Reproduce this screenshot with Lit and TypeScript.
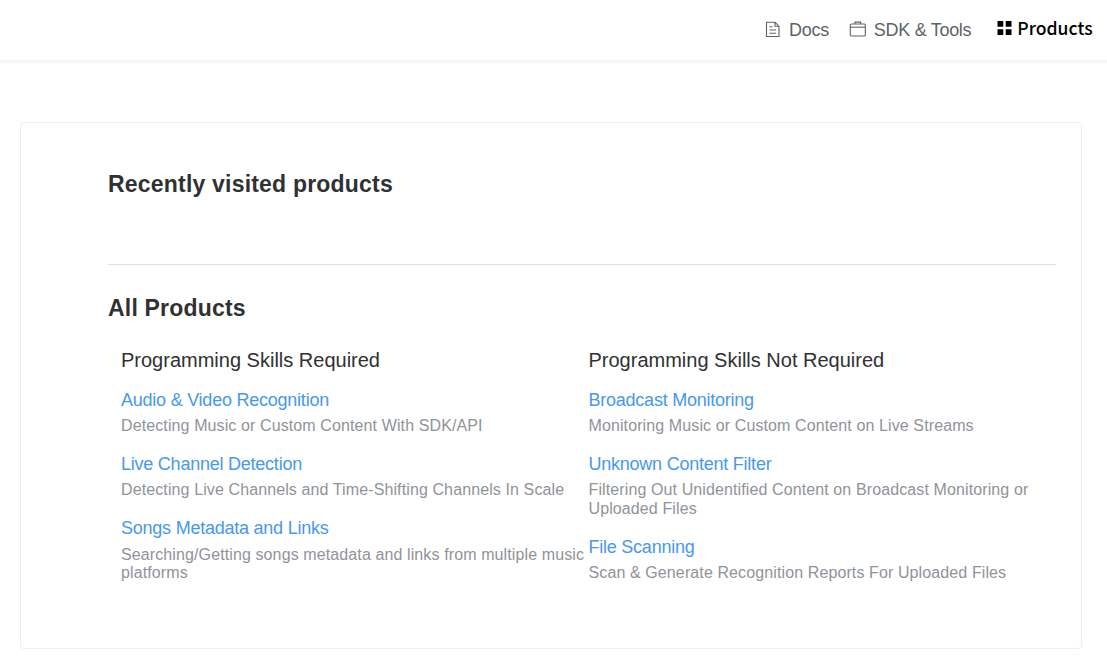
import { LitElement, html, css } from "lit";
import { customElement } from "lit/decorators.js";

type Product = { name: string; text: string };
const coding: Product[] = [
  { name: "Audio & Video Recognition", text: "Detecting Music or Custom Content With SDK/API" },
  { name: "Live Channel Detection", text: "Detecting Live Channels and Time-Shifting Channels In Scale" },
  { name: "Songs Metadata and Links", text: "Searching/Getting songs metadata and links from multiple music platforms" },
];
const noCoding: Product[] = [
  { name: "Broadcast Monitoring", text: "Monitoring Music or Custom Content on Live Streams" },
  { name: "Unknown Content Filter", text: "Filtering Out Unidentified Content on Broadcast Monitoring or Uploaded Files" },
  { name: "File Scanning", text: "Scan & Generate Recognition Reports For Uploaded Files" },
];

@customElement("app-root")
export class AppRoot extends LitElement {
  static styles = css`
    :host { display: block; height: 661px; overflow: hidden; background: #fff; font-family: "Liberation Sans", Arial, sans-serif; color: #303133; }
    * { box-sizing: border-box; }
    header { height: 60px; display: flex; justify-content: flex-end; align-items: center; padding-right: 14.4px; box-shadow: 0 2px 2px 1px #f6f6f6; color: #606266; font-size: 18px; letter-spacing: -0.3px; white-space: nowrap; }
    .item { display: flex; align-items: center; }
    .item svg { display: block; }
    .docs { gap: 7px; margin-right: 20px; }
    .tools { gap: 7px; margin-right: 26px; }
    .products { gap: 5px; color: #000; font: 500 17.6px/26px "Noto Sans CJK SC", "Noto Sans", sans-serif; letter-spacing: 0; padding-bottom: 3px; }
    .products svg { margin-bottom: 1px; }
    .products span { padding-bottom: 1px; }
    .card { margin: 62px 25px 0 20px; height: 527px; border: 1px solid #ebeef5; border-radius: 4px; padding: 47px 25px 0 87px; }
    h2 { margin: 0; font-size: 23px; line-height: 28px; letter-spacing: 0.2px; }
    .recent { height: 95px; border-bottom: 1px solid #dcdfe6; }
    .all { margin-top: 29px; }
    .columns { display: grid; grid-template-columns: 467.5px 467px; padding-left: 13px; margin-top: 25px; }
    h3 { margin: 0 0 16px; font-size: 20px; line-height: 26px; font-weight: 400; }
    .product { margin-bottom: 17.6px; }
    .name { display: block; color: #4799ee; font-size: 18px; line-height: 22px; letter-spacing: -0.235px; margin-bottom: 6.2px; text-decoration: none; }
    p { margin: 0; color: #909399; font-size: 16px; line-height: 18.4px; letter-spacing: 0.11px; }
  `;

  private list(title: string, products: Product[]) {
    return html`<section><h3>${title}</h3>${products.map(
      (p) => html`<div class="product"><a class="name">${p.name}</a><p>${p.text}</p></div>`
    )}</section>`;
  }

  render() {
    return html`
      <header>
        <div class="item docs">
          <svg width="18" height="18" viewBox="0 0 18 18" fill="none" stroke="#606266" stroke-width="1.1"><path d="M2.5 1.2h8.5L15 5.2V15.5H2.5zM11 1.2v4h4M5.5 5.8h3M5.5 9h6.5M5.5 12.2h6.5"/></svg>
          <span>Docs</span>
        </div>
        <div class="item tools">
          <svg width="18" height="18" viewBox="0 0 18 18" fill="none" stroke="#606266" stroke-width="1.1"><rect x="1.3" y="3" width="15" height="12" rx="1"/><path d="M6 3V1h5.6v2" fill="#b4b5b8"/><path d="M1.3 6.2h15"/></svg>
          <span>SDK &amp; Tools</span>
        </div>
        <div class="item products">
          <svg width="15" height="16" viewBox="0 0 15 16"><path d="M.5 1h5.8v5.8H.5zM8.7 1h5.8v5.8H8.7zM.5 9.2h5.8V15H.5zM8.7 9.2h5.8V15H8.7z"/></svg>
          <span>Products</span>
        </div>
      </header>
      <main class="card">
        <div class="recent"><h2>Recently visited products</h2></div>
        <h2 class="all">All Products</h2>
        <div class="columns">
          ${this.list("Programming Skills Required", coding)}
          ${this.list("Programming Skills Not Required", noCoding)}
        </div>
      </main>`;
  }
}
